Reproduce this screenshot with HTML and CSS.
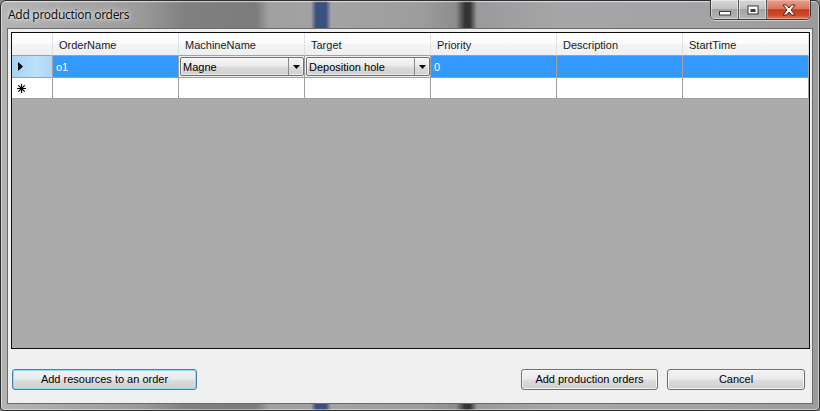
FILE: index.html
```html
<!DOCTYPE html>
<html>
<head>
<meta charset="utf-8">
<title>Add production orders</title>
<link rel="stylesheet" href="styles.css">
</head>
<body>
<div class="window">
  <div class="titlebar">
    <span class="title">Add production orders</span>
    <div class="caption">
      <div class="cap-btn cap-min">
        <svg width="14" height="6" viewBox="0 0 14 6"><rect x="1.5" y="1.5" width="11" height="3.5" fill="#fff" stroke="#3a3a3a" stroke-width="1"/></svg>
      </div>
      <div class="cap-btn cap-max">
        <svg width="12" height="10" viewBox="0 0 12 10"><rect x="0.5" y="0.5" width="11" height="9" fill="#3a3a3a"/><rect x="1.5" y="1.5" width="9" height="7" fill="#fff"/><rect x="3.5" y="4" width="5" height="3" fill="#3a3a3a"/></svg>
      </div>
      <div class="cap-btn cap-close">
        <svg width="16" height="12" viewBox="0 0 16 12"><path d="M2 1 L5.5 1 L8 4 L10.5 1 L14 1 L10 6 L14 11 L10.5 11 L8 8 L5.5 11 L2 11 L6 6 Z" fill="#fff" stroke="#5a2418" stroke-width="1" stroke-linejoin="round"/></svg>
      </div>
    </div>
  </div>
  <div class="client">
    <div class="grid">
      <div class="row head">
        <div class="cell rh"></div>
        <div class="cell">OrderName</div>
        <div class="cell">MachineName</div>
        <div class="cell">Target</div>
        <div class="cell">Priority</div>
        <div class="cell">Description</div>
        <div class="cell">StartTime</div>
      </div>
      <div class="row sel">
        <div class="cell rh rh-sel">
          <svg width="5" height="9" viewBox="0 0 5 9"><path d="M0 0 L5 4.5 L0 9 Z" fill="#000"/></svg>
        </div>
        <div class="cell">o1</div>
        <div class="cell combo-cell"><div class="combo"><span class="combo-text">Magne</span><span class="combo-btn"><svg width="7" height="4" viewBox="0 0 7 4"><path d="M0 0 L7 0 L3.5 4 Z" fill="#000"/></svg></span></div></div>
        <div class="cell combo-cell"><div class="combo"><span class="combo-text">Deposition hole</span><span class="combo-btn"><svg width="7" height="4" viewBox="0 0 7 4"><path d="M0 0 L7 0 L3.5 4 Z" fill="#000"/></svg></span></div></div>
        <div class="cell">0</div>
        <div class="cell"></div>
        <div class="cell"></div>
      </div>
      <div class="row new">
        <div class="cell rh">
          <svg width="9" height="9" viewBox="0 0 9 9"><path d="M4.5 0 V9 M0 4.5 H9 M1.3 1.3 L7.7 7.7 M7.7 1.3 L1.3 7.7" stroke="#000" stroke-width="1.2"/></svg>
        </div>
        <div class="cell"></div>
        <div class="cell"></div>
        <div class="cell"></div>
        <div class="cell"></div>
        <div class="cell"></div>
        <div class="cell"></div>
      </div>
    </div>
    <div class="actions">
      <button class="btn btn-focus btn-res">Add resources to an order</button>
      <div class="spacer"></div>
      <button class="btn btn-add">Add production orders</button>
      <button class="btn btn-cancel">Cancel</button>
    </div>
  </div>
</div>
</body>
</html>
```

FILE: styles.css
```css
* { box-sizing: border-box; }
html, body { margin: 0; padding: 0; }
body {
  width: 820px;
  height: 411px;
  overflow: hidden;
  background: #8a8a8a;
  font-family: "Liberation Sans", Arial, sans-serif;
  font-size: 11px;
  color: #000;
}

.window {
  width: 820px;
  height: 411px;
  border: 1px solid #2e2e2e;
  border-radius: 6px 6px 4px 4px;
  padding: 0 6px 6px 6px;
  display: flex;
  flex-direction: column;
  background:
    linear-gradient(180deg, rgba(255,255,255,0.35) 0px, rgba(255,255,255,0) 2px),
    linear-gradient(90deg,
      #b4b4b4 0px, #a9a9a9 60px, #9a9a9a 140px, #808080 185px, #7c7c7c 255px,
      #a0a0a0 268px, #a2a2a2 310px, #3a5180 315px, #3a5180 325px, #a3a3a3 330px,
      #9d9d9d 420px, #8c8c8c 455px, #353535 464px, #353535 469px, #9a9a9c 476px,
      #a6a6a9 560px, #a3a3a6 700px, #9b9b9b 820px);
  box-shadow: inset 0 0 0 1px rgba(255,255,255,0.45);
}

.titlebar {
  height: 27px;
  display: flex;
  align-items: flex-start;
  justify-content: space-between;
}

.title {
  font-family: "Noto Sans", "Open Sans", sans-serif;
  font-size: 12px;
  line-height: 16px;
  margin-top: 6px;
  margin-left: 1px;
  color: #111;
  text-shadow: 0 0 6px rgba(255,255,255,0.9), 0 0 3px rgba(255,255,255,0.8);
  letter-spacing: -0.3px;
}

.caption {
  display: flex;
  margin-top: -1px;
  margin-right: 2px;
  height: 20px;
  border: 1px solid #3c3c3c;
  border-top: none;
  border-radius: 0 0 5px 5px;
  overflow: hidden;
  box-shadow: 0 1px 0 rgba(255,255,255,0.5);
}

.cap-btn {
  height: 100%;
  display: flex;
  align-items: center;
  justify-content: center;
}

.cap-min, .cap-max {
  width: 28px;
  background: linear-gradient(180deg, #d6d6d6 0%, #c2c2c2 45%, #a4a4a4 50%, #b4b4b4 100%);
  border-right: 1px solid #5a5a5a;
  box-shadow: inset 0 0 0 1px rgba(255,255,255,0.45);
}
.cap-min svg { margin-top: 6px; }

.cap-close {
  width: 43px;
  background: linear-gradient(180deg, #e8a190 0%, #d8755e 45%, #c6391c 52%, #d0492a 80%, #e0806a 100%);
  box-shadow: inset 0 0 0 1px rgba(255,200,190,0.45);
}

.client {
  flex: 1;
  border: 1px solid #6a6a6a;
  background: #f0f0f0;
  display: flex;
  flex-direction: column;
  padding: 3px 2px 0 3px;
}

.grid {
  height: 317px;
  border: 1px solid #0c0c0c;
  background: #ababab;
  display: flex;
  flex-direction: column;
}

.row {
  display: grid;
  grid-template-columns: 41px repeat(6, 126px);
}

.cell {
  border-right: 1px solid #a0a0a0;
  border-bottom: 1px solid #a0a0a0;
  display: flex;
  align-items: center;
  white-space: nowrap;
  overflow: hidden;
}

.row.head { height: 23px; }
.row.head .cell {
  background: linear-gradient(180deg, #ffffff 0%, #fbfbfc 45%, #f2f3f5 55%, #eef0f2 100%);
  border-right: 1px solid #dde1e6;
  border-bottom: 1px solid #a0a0a0;
  padding-left: 6px;
  padding-top: 2px;
  color: #1a1a1a;
}

.row.sel { height: 22px; }
.row.sel .cell {
  background: #3399ff;
  color: #fff;
  padding-left: 3px;
}
.row.sel .cell.rh-sel {
  background: linear-gradient(90deg, #a6d3f5 0%, #bfe0f8 60%, #acd6f6 100%);
  padding-left: 6px;
}
.row.sel .cell.combo-cell {
  background: #f0f0f0;
  padding: 1px 0 1px 1px;
  align-items: stretch;
}

.combo {
  flex: 1;
  display: flex;
  border: 1px solid #707070;
  border-radius: 2px;
  background: linear-gradient(180deg, #f4f4f4 0%, #ebebeb 48%, #dddddd 52%, #cfcfcf 100%);
  color: #000;
  box-shadow: inset 0 0 0 1px rgba(255,255,255,0.6);
}
.combo-text {
  flex: 1;
  display: flex;
  align-items: center;
  padding-left: 2px;
  padding-top: 1px;
}
.combo-btn {
  width: 15px;
  border-left: 1px solid #8a8a8a;
  display: flex;
  align-items: center;
  justify-content: center;
  padding-top: 1px;
}

.row.new { height: 21px; }
.row.new .cell { background: #fff; }
.row.new .cell.rh {
  background: #fff;
  padding-left: 5px;
}

.actions {
  display: flex;
  margin-top: 20px;
  height: 21px;
  padding: 0 5px 0 1px;
}
.spacer { flex: 1; }

.btn {
  font-family: "Liberation Sans", Arial, sans-serif;
  font-size: 11px;
  color: #000;
  height: 21px;
  padding: 0;
  border: 1px solid #707070;
  border-radius: 3px;
  background: linear-gradient(180deg, #f2f2f2 0%, #ebebeb 48%, #dddddd 52%, #cfcfcf 100%);
  box-shadow: inset 0 0 0 1px rgba(255,255,255,0.7);
  text-align: center;
  line-height: 19px;
}
.btn-focus {
  border-color: #3c7fb1;
  box-shadow: inset 0 0 0 1px #8fdcfb;
}
.btn-res { width: 185px; }
.btn-add { width: 137px; }
.btn-cancel { width: 138px; margin-left: 9px; }
```
